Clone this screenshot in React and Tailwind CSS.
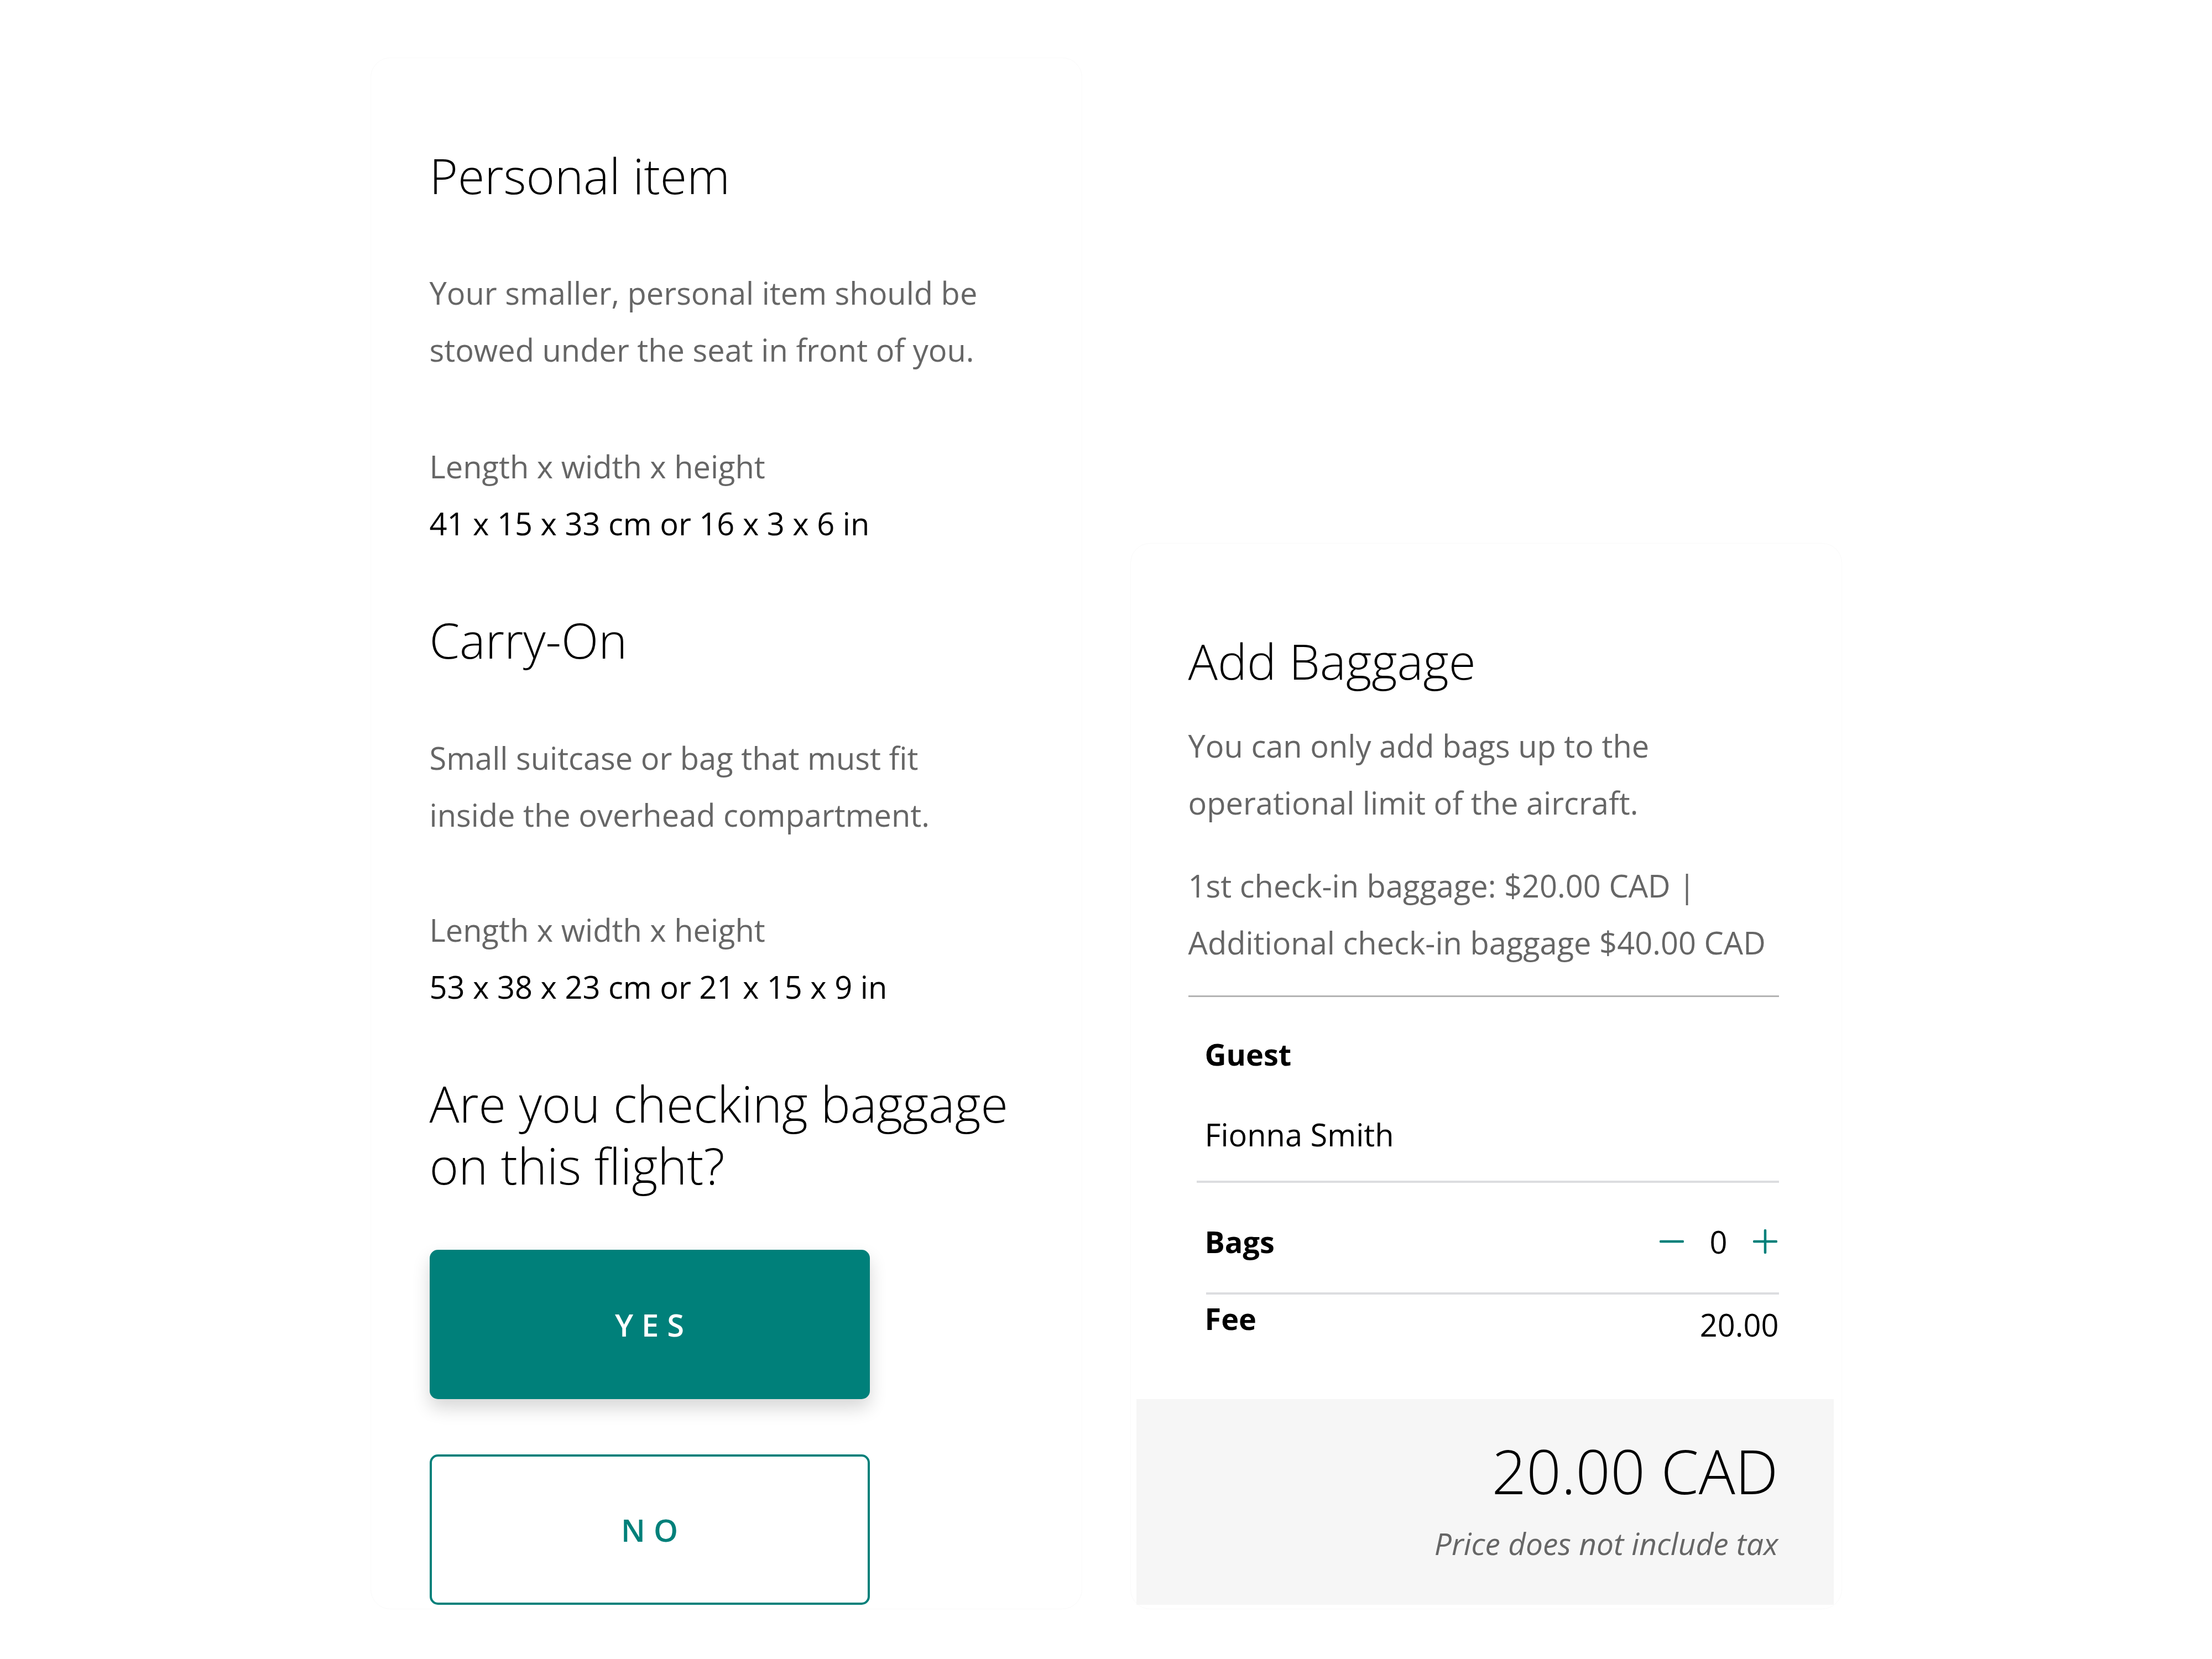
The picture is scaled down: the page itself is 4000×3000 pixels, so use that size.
import React from "react";

const teal = "#00807a";

function Minus() {
  return (
    <svg width="44" height="44" viewBox="0 0 44 44" fill="none">
      <line x1="2" y1="22" x2="42" y2="22" stroke={teal} strokeWidth="4.5" strokeLinecap="round" />
    </svg>
  );
}

function Plus() {
  return (
    <svg width="44" height="44" viewBox="0 0 44 44" fill="none">
      <line x1="2" y1="22" x2="42" y2="22" stroke={teal} strokeWidth="4.5" strokeLinecap="round" />
      <line x1="22" y1="2" x2="22" y2="42" stroke={teal} strokeWidth="4.5" strokeLinecap="round" />
    </svg>
  );
}

export default function App() {
  return (
    <div className="min-h-screen bg-white font-['Open_Sans','Noto_Sans',sans-serif] text-black">
      <div className="mx-auto flex w-[2661px] items-end gap-[87px] pt-[104px]">
        {/* Baggage info */}
        <section className="w-[1287px] rounded-[36px] border border-[#fafafa] px-[106px] pt-[156px] pb-[7px]">
          <h2 className="text-[88px] font-light leading-[112px]">Personal item</h2>
          <p className="mt-[105px] text-[56px] leading-[103px] text-[#666]">
            Your smaller, personal item should be
            <br />
            stowed under the seat in front of you.
          </p>
          <div className="mt-[108px] text-[56px] leading-[103px]">
            <p className="text-[#666]">Length x width x height</p>
            <p>41 x 15 x 33 cm or 16 x 3 x 6 in</p>
          </div>

          <h2 className="mt-[103px] text-[88px] font-light leading-[112px]">Carry-On</h2>
          <p className="mt-[106px] text-[56px] leading-[103px] text-[#666]">
            Small suitcase or bag that must fit
            <br />
            inside the overhead compartment.
          </p>
          <div className="mt-[105px] text-[56px] leading-[103px]">
            <p className="text-[#666]">Length x width x height</p>
            <p>53 x 38 x 23 cm or 21 x 15 x 9 in</p>
          </div>

          <h2 className="mt-[103px] text-[90px] font-light leading-[112px]">
            Are you checking baggage
            <br />
            on this flight?
          </h2>

          <button className="mt-[97px] flex h-[270px] w-[796px] items-center justify-center rounded-[15px] bg-[#00807a] pl-[15px] text-[56px] font-semibold tracking-[15px] text-white shadow-[0_16px_32px_rgba(0,0,0,0.16)]">
            YES
          </button>
          <button className="mt-[100px] flex h-[272px] w-[796px] items-center justify-center rounded-[15px] border-[4px] border-[#00807a] bg-white pl-[15px] text-[56px] font-semibold tracking-[15px] text-[#00807a]">
            NO
          </button>
        </section>

        {/* Add baggage */}
        <section className="w-[1287px] rounded-[36px] border border-[#fafafa] pt-[156px] pb-[7px]">
          <div className="pl-[104px] pr-[113px]">
            <h2 className="text-[89px] font-light leading-[112px]">Add Baggage</h2>
            <p className="mt-[46px] text-[56px] leading-[103px] text-[#666]">
              You can only add bags up to the
              <br />
              operational limit of the aircraft.
            </p>
            <p className="mt-[47px] text-[56px] leading-[103px] text-[#666]">
              1st check-in baggage: $20.00 CAD |
              <br />
              Additional check-in baggage $40.00 CAD
            </p>

            <div className="mt-[44px] h-[3px] bg-[#b4b4b4]" />

            <div className="pl-[30px] pt-[66px]">
              <p className="text-[54px] font-bold leading-[74px]">Guest</p>
              <p className="mt-[70px] text-[56px] leading-[76px]">Fionna Smith</p>
            </div>

            <div className="ml-[15px] mt-[46px] h-[4px] bg-[#dcdde0]" />

            <div className="flex items-center justify-between pl-[30px] pt-[68px]">
              <span className="text-[54px] font-bold leading-[74px]">Bags</span>
              <div className="mr-[3px] flex items-center gap-[46px]">
                <Minus />
                <span className="text-[56px] leading-[76px]">0</span>
                <Plus />
              </div>
            </div>

            <div className="ml-[32px] mt-[54px] h-[4px] bg-[#dcdde0]" />

            <div className="flex items-start justify-between pl-[30px] pt-[6px]">
              <span className="text-[54px] font-bold leading-[74px]">Fee</span>
              <span className="mt-[10px] text-[56px] leading-[76px]">20.00</span>
            </div>
          </div>

          <div className="ml-[10px] mr-[14px] mt-[97px] bg-[#f6f6f6] pt-[54px] pb-[73px] pr-[100px] text-right">
            <p className="text-[110px] font-light leading-[150px]">20.00 CAD</p>
            <p className="mt-[19px] text-[55px] italic leading-[76px] text-[#666]">
              Price does not include tax
            </p>
          </div>
        </section>
      </div>
    </div>
  );
}
